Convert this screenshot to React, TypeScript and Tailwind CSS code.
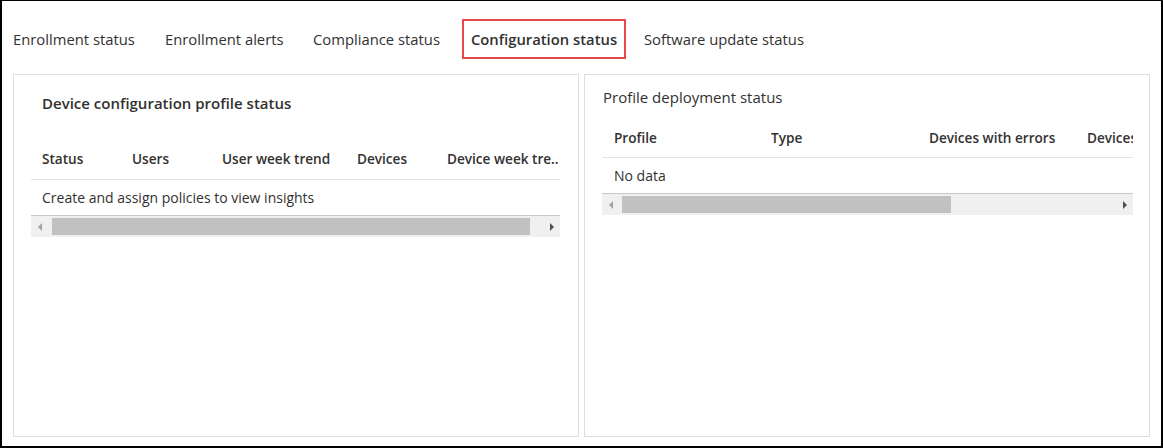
import React from "react";

function Scrollbar({ thumbLeft, thumbWidth }: { thumbLeft: number; thumbWidth: number }) {
  return (
    <div className="flex h-[21px] items-center bg-[#f0f0f0]">
      <div className="flex h-full w-[17px] shrink-0 items-center justify-center">
        <div className="h-0 w-0 border-y-[4px] border-r-[4px] border-y-transparent border-r-[#a3a3a3]" />
      </div>
      <div className="relative h-full flex-1">
        <div
          className="absolute top-[2px] h-[17px] bg-[#c1c1c1]"
          style={{ left: thumbLeft, width: thumbWidth }}
        />
      </div>
      <div className="flex h-full w-[17px] shrink-0 items-center justify-center">
        <div className="h-0 w-0 border-y-[4px] border-l-[4px] border-y-transparent border-l-[#505050]" />
      </div>
    </div>
  );
}

export default function App() {
  const font = { fontFamily: '"Open Sans", "Noto Sans", Arial, sans-serif' };
  return (
    <div
      className="flex h-[448px] w-[1163px] flex-col border-b-2 border-l-2 border-r-2 border-t border-black bg-white px-[11px] pb-[9px] text-[#323130]"
      style={font}
    >
      {/* Tabs */}
      <div className="mb-[15px] mt-[18px] flex h-[40px] items-center text-[14.8px]">
        <div className="w-[152px] shrink-0 whitespace-nowrap">Enrollment status</div>
        <div className="w-[148px] shrink-0 whitespace-nowrap">Enrollment alerts</div>
        <div className="w-[149px] shrink-0 whitespace-nowrap">Compliance status</div>
        <div className="flex h-[40px] w-[164px] shrink-0 items-center justify-center whitespace-nowrap border-2 border-[#e8474c] font-semibold">
          Configuration status
        </div>
        <div className="ml-[18px] shrink-0 whitespace-nowrap">Software update status</div>
      </div>

      {/* Panels */}
      <div className="flex flex-1 gap-[5px]">
        {/* Left panel */}
        <div className="flex w-[566px] flex-col border border-[#dedede]">
          <div className="pl-[28px] pt-[18px] text-[15px] font-semibold leading-[20px]">
            Device configuration profile status
          </div>
          <div className="mt-[27px] pl-[17px] pr-[18px]">
            <div className="flex h-[40px] items-center overflow-hidden whitespace-nowrap border-b border-[#e3e3e3] text-[13.6px] font-semibold">
              <div className="w-[90px] shrink-0 pl-[11px]">Status</div>
              <div className="w-[90px] shrink-0 pl-[11px]">Users</div>
              <div className="w-[135px] shrink-0 pl-[11px]">User week trend</div>
              <div className="w-[90px] shrink-0 pl-[11px]">Devices</div>
              <div className="shrink-0 pl-[11px]">Device week tre..</div>
            </div>
            <div className="flex h-[36px] items-center border-b border-[#c8c8c8] pl-[11px] text-[14px]">
              Create and assign policies to view insights
            </div>
            <Scrollbar thumbLeft={4} thumbWidth={478} />
          </div>
        </div>

        {/* Right panel */}
        <div className="flex w-[566px] flex-col border border-[#dedede]">
          <div className="pl-[18px] pt-[12px] text-[15px] leading-[20px]">Profile deployment status</div>
          <div className="mt-[12px] pl-[17px] pr-[16px]">
            <div className="flex h-[39px] items-center overflow-hidden whitespace-nowrap border-b border-[#e3e3e3] text-[13.6px] font-semibold">
              <div className="w-[157px] shrink-0 pl-[12px]">Profile</div>
              <div className="w-[158px] shrink-0 pl-[12px]">Type</div>
              <div className="w-[158px] shrink-0 pl-[12px]">Devices with errors</div>
              <div className="shrink-0 pl-[12px]">Devices</div>
            </div>
            <div className="flex h-[36px] items-center border-b border-[#c8c8c8] pl-[12px] text-[14px]">
              No data
            </div>
            <Scrollbar thumbLeft={3} thumbWidth={329} />
          </div>
        </div>
      </div>
    </div>
  );
}
